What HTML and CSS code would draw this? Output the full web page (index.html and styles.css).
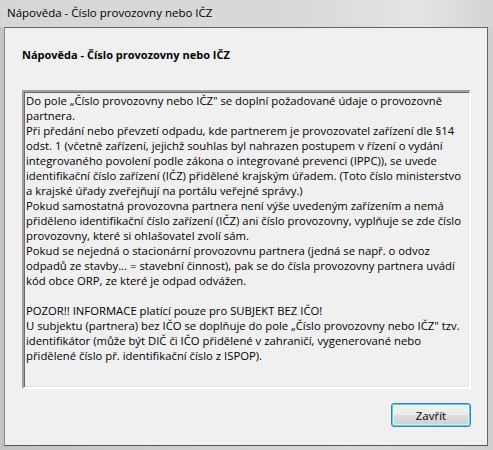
FILE: index.html
```html
<!DOCTYPE html>
<html lang="cs">
<head>
<meta charset="utf-8">
<title>Nápověda - Číslo provozovny nebo IČZ</title>
<link rel="stylesheet" href="styles.css">
</head>
<body>
<div class="window">
  <div class="titlebar">Nápověda - Číslo provozovny nebo IČZ</div>
  <div class="client">
    <div class="heading">Nápověda - Číslo provozovny nebo IČZ</div>
    <div class="textbox">
      <div class="line">Do pole „Číslo provozovny nebo IČZ" se doplní požadované údaje o provozovně</div>
      <div class="line">partnera.</div>
      <div class="line">Při předání nebo převzetí odpadu, kde partnerem je provozovatel zařízení dle §14</div>
      <div class="line">odst. 1 (včetně zařízení, jejichž souhlas byl nahrazen postupem v řízení o vydání</div>
      <div class="line">integrovaného povolení podle zákona o integrované prevenci (IPPC)), se uvede</div>
      <div class="line">identifikační číslo zařízení (IČZ) přidělené krajským úřadem. (Toto číslo ministerstvo</div>
      <div class="line">a krajské úřady zveřejňují na portálu veřejné správy.)</div>
      <div class="line">Pokud samostatná provozovna partnera není výše uvedeným zařízením a nemá</div>
      <div class="line">přiděleno identifikační číslo zařízení (IČZ) ani číslo provozovny, vyplňuje se zde číslo</div>
      <div class="line">provozovny, které si ohlašovatel zvolí sám.</div>
      <div class="line">Pokud se nejedná o stacionární provozovnu partnera (jedná se např. o odvoz</div>
      <div class="line">odpadů ze stavby... = stavební činnost), pak se do čísla provozovny partnera uvádí</div>
      <div class="line">kód obce ORP, ze které je odpad odvážen.</div>
      <div class="line">&nbsp;</div>
      <div class="line">POZOR!! INFORMACE platící pouze pro SUBJEKT BEZ IČO!</div>
      <div class="line">U subjektu (partnera) bez IČO se doplňuje do pole „Číslo provozovny nebo IČZ" tzv.</div>
      <div class="line">identifikátor (může být DIČ či IČO přidělené v zahraničí, vygenerované nebo</div>
      <div class="line">přidělené číslo př. identifikační číslo z ISPOP).</div>
    </div>
    <div class="footer">
      <button class="btn" type="button">Zavřít</button>
    </div>
  </div>
</div>
</body>
</html>
```
FILE: styles.css
```css
html, body {
  margin: 0;
  padding: 0;
}
body {
  width: 493px;
  height: 450px;
  overflow: hidden;
  font-family: "Open Sans", "Liberation Sans", sans-serif;
  font-size: 12px;
  color: #000;
}
.window {
  box-sizing: border-box;
  width: 493px;
  height: 450px;
  display: flex;
  flex-direction: column;
  background: linear-gradient(90deg, #c3c3c3 0%, #cfcfcf 40%, #d8d8d8 75%, #cfcfcf 100%);
  padding: 0 5px 4px 4px;
}
.titlebar {
  height: 27px;
  line-height: 26px;
  font-size: 11.5px;
  color: #000;
  white-space: nowrap;
  margin: 0 -5px 0 -4px;
  padding-left: 7px;
  background: linear-gradient(90deg, #d6d6d6 0%, #d9d9d9 60%, #e4e4e4 85%, #d4d4d4 100%);
}
.client {
  flex: 1;
  background: #f0f0f0;
  border: 1px solid #646464;
  border-left-color: #8a8a8a;
  border-bottom-color: #555;
  display: flex;
  flex-direction: column;
  padding: 0 16px 0 16px;
}
.heading {
  font-weight: bold;
  font-size: 11px;
  line-height: 15px;
  margin-top: 19px;
  height: 15px;
  padding-left: 1px;
  white-space: nowrap;
}
.textbox {
  margin-top: 28px;
  margin-left: 1px;
  height: 299px;
  box-sizing: border-box;
  border-style: solid;
  border-width: 2px;
  border-color: #a0a0a0 #fff #fff #a0a0a0;
  box-shadow: inset 1px 1px 0 #696969, inset -1px -1px 0 #e3e3e3;
  padding: 1px 2px;
  font-size: 11.3px;
  line-height: 15px;
}
.line {
  white-space: nowrap;
  height: 15px;
}
.footer {
  display: flex;
  justify-content: flex-end;
  margin-top: 14px;
}
.btn {
  width: 80px;
  height: 24px;
  font-family: inherit;
  font-size: 11.5px;
  color: #000;
  border: 1px solid #3c7fb1;
  border-radius: 3px;
  background: linear-gradient(180deg, #f2f2f2 0%, #ebebeb 48%, #dddddd 52%, #cfcfcf 100%);
  box-shadow: inset 0 0 0 1px #48d4f8, inset 0 0 0 2px rgba(255,255,255,0.5);
  padding: 0;
}
```
